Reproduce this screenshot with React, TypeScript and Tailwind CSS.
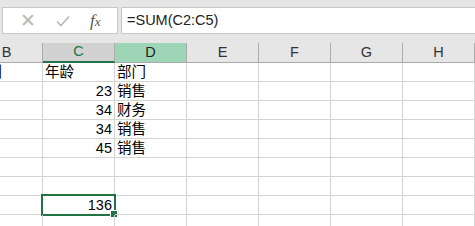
import React from "react";

const cols = ["B", "C", "D", "E", "F", "G", "H"];

type Row = { b?: string; c?: string; d?: string; cRight?: boolean };

const rows: Row[] = [
  { b: "性别", c: "年龄", d: "部门" },
  { c: "23", d: "销售", cRight: true },
  { c: "34", d: "财务", cRight: true },
  { c: "34", d: "销售", cRight: true },
  { c: "45", d: "销售", cRight: true },
  {},
  {},
  { c: "136", cRight: true },
  {},
];

const font = { fontFamily: '"Liberation Sans", "Noto Sans CJK SC", sans-serif' };

function FormulaBar() {
  return (
    <div className="h-[43px] bg-[#e6e6e6] flex items-start pt-[7px] pl-[2px] gap-[3px]">
      <div className="w-[116px] h-[27px] bg-white border border-[#c6c6c6] flex items-center">
        <span className="w-[50px] text-center text-[19px] text-[#b8b8b8] leading-none">✕</span>
        <svg width="16" height="14" viewBox="0 0 16 14" className="ml-[2px]">
          <path d="M2 7.5 L6 11.5 L14 2.5" fill="none" stroke="#b8b8b8" strokeWidth="1.6" />
        </svg>
        <span
          className="ml-[19px] text-[17px] italic text-[#555] leading-none"
          style={{ fontFamily: '"Liberation Serif", serif' }}
        >
          f<span className="text-[13px]">x</span>
        </span>
      </div>
      <div className="flex-1 h-[27px] bg-white border border-[#c6c6c6] border-r-0 flex items-center pl-[5px]">
        <span className="text-[14.5px] text-[#222]" style={font}>
          =SUM(C2:C5)
        </span>
      </div>
    </div>
  );
}

export default function App() {
  return (
    <div className="w-[475px] h-[226px] overflow-hidden bg-white relative" style={font}>
      <FormulaBar />
      <div className="-ml-[29px]">
        <div className="flex h-[20px] bg-[#e6e6e6] border-b border-[#ababab]">
          {cols.map((c) => {
            const cls =
              c === "C"
                ? "bg-[#d2d2d2] text-[#217346] border-b-2 border-b-[#217346] -mb-[1px]"
                : c === "D"
                ? "bg-[#9fd5b7] text-[#222]"
                : "text-[#333]";
            return (
              <div
                key={c}
                className={`w-[72px] shrink-0 border-r border-r-[#ababab] flex items-center justify-center text-[14.5px] ${cls}`}
              >
                {c}
              </div>
            );
          })}
        </div>
        {rows.map((r, i) => (
          <div key={i} className="flex h-[19px]">
            {cols.map((c) => {
              const val = c === "B" ? r.b : c === "C" ? r.c : c === "D" ? r.d : undefined;
              const right = c === "C" && r.cRight;
              const selected = c === "C" && i === 7;
              return (
                <div
                  key={c}
                  className={`w-[72px] shrink-0 border-r border-b border-[#d4d4d4] relative flex items-center text-[14.5px] text-black px-[2px] ${
                    right ? "justify-end" : "justify-start"
                  }`}
                >
                  <span className="leading-none whitespace-nowrap">{val}</span>
                  {selected && (
                    <>
                      <div className="absolute -left-[2px] -top-[2px] -right-[2px] -bottom-[2px] border-2 border-[#217346] pointer-events-none" />
                      <div className="absolute -right-[4px] -bottom-[4px] w-[6px] h-[6px] bg-[#217346] border border-white box-content" />
                    </>
                  )}
                </div>
              );
            })}
          </div>
        ))}
      </div>
    </div>
  );
}
